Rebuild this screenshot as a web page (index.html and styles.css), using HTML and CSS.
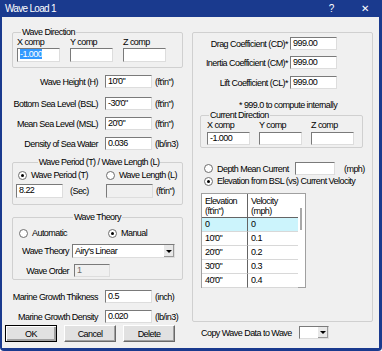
FILE: index.html
```html
<!DOCTYPE html>
<html lang="en">

<head>
  <meta charset="UTF-8" />
  <title>Wave Load 1</title>
  <link rel="stylesheet" href="styles.css">
</head>

<body>
  <div class="window">
    <div class="titlebar">
      <span class="title">Wave Load 1</span>
      <span class="help">?</span>
      <span class="close">&#x2715;</span>
    </div>

    <div class="client">
      <!-- left column -->
      <div class="col col-left">
        <fieldset class="group dir">
          <legend>Wave Direction</legend>
          <div class="comp-grid">
            <span>X comp</span><span>Y comp</span><span>Z comp</span>
            <div class="field"><span class="sel">-1.000</span></div>
            <div class="field"></div>
            <div class="field"></div>
          </div>
        </fieldset>

        <div class="row r-wh"><span class="lbl">Wave Height (H)</span><div class="field w47">10'0"</div><span class="unit">(ft'in")</span></div>
        <div class="row r-bsl"><span class="lbl">Bottom Sea Level (BSL)</span><div class="field w47">-30'0"</div><span class="unit">(ft'in")</span></div>
        <div class="row r-msl"><span class="lbl">Mean Sea Level (MSL)</span><div class="field w47">20'0"</div><span class="unit">(ft'in")</span></div>
        <div class="row r-den"><span class="lbl">Density of Sea Water</span><div class="field w47">0.036</div><span class="unit">(lb/in3)</span></div>

        <fieldset class="group period">
          <legend class="center">Wave Period (T) / Wave Length (L)</legend>
          <div class="opt-row">
            <div class="opt-cell"><span class="radio on"></span><span>Wave Period (T)</span></div>
            <div class="opt"><span class="radio"></span><span>Wave Length (L)</span></div>
          </div>
          <div class="in-row">
            <div class="in-cell"><div class="field w47">8.22</div><span class="unit sec">(Sec)</span></div>
            <div class="field w47 off"></div><span class="unit">(ft'in")</span>
          </div>
        </fieldset>

        <fieldset class="group theory">
          <legend class="center">Wave Theory</legend>
          <div class="opt-row th-opts">
            <div class="opt-cell th-cell"><span class="radio"></span><span>Automatic</span></div>
            <div class="opt"><span class="radio on"></span><span>Manual</span></div>
          </div>
          <div class="th-row th-sel">
            <span class="th-lbl">Wave Theory</span>
            <div class="combo w103"><span class="combo-val">Airy's Linear</span><span class="combo-btn"></span></div>
          </div>
          <div class="th-row th-order">
            <span class="th-lbl">Wave Order</span>
            <div class="field off order">1</div>
          </div>
        </fieldset>

        <div class="row r-mgt"><span class="lbl">Marine Growth Thikness</span><div class="field w47">0.5</div><span class="unit">(inch)</span></div>
        <div class="row r-mgd"><span class="lbl">Marine Growth Density</span><div class="field w47">0.020</div><span class="unit">(lb/in3)</span></div>

        <div class="buttons">
          <button class="btn default">OK</button>
          <button class="btn">Cancel</button>
          <button class="btn">Delete</button>
        </div>
      </div>

      <!-- right column -->
      <div class="col col-right">
        <fieldset class="group coeffs">
          <div class="crow c-drag"><span class="clbl">Drag Coefficient (CD)*</span><div class="field w47">999.00</div></div>
          <div class="crow c-inertia"><span class="clbl">Inertia Coefficient (CM)*</span><div class="field w47">999.00</div></div>
          <div class="crow c-lift"><span class="clbl">Lift Coefficient (CL)*</span><div class="field w47">999.00</div></div>
          <div class="note">* 999.0 to compute internally</div>

          <fieldset class="group current">
            <legend>Current Direction</legend>
            <div class="comp-grid">
              <span>X comp</span><span>Y comp</span><span>Z comp</span>
              <div class="field">-1.000</div>
              <div class="field"></div>
              <div class="field"></div>
            </div>
          </fieldset>

          <div class="crow depth"><span class="radio"></span><span class="depth-lbl">Depth Mean Current</span><div class="field w40"></div><span class="unit mph">(mph)</span></div>
          <div class="crow elev"><span class="radio on"></span><span class="depth-lbl">Elevation from BSL (vs) Current Velocity</span></div>

          <div class="grid">
            <div class="grid-cols">
              <div class="gcell head">Elevation<br>(ft'in")</div>
              <div class="gcell head">Velocity<br>(mph)</div>
              <div class="gcell cur">0</div><div class="gcell cur">0</div>
              <div class="gcell">10'0"</div><div class="gcell">0.1</div>
              <div class="gcell">20'0"</div><div class="gcell">0.2</div>
              <div class="gcell">30'0"</div><div class="gcell">0.3</div>
              <div class="gcell">40'0"</div><div class="gcell">0.4</div>
            </div>
            <div class="grid-scroll"><span class="thumb"></span></div>
          </div>
        </fieldset>

        <div class="copy-row">
          <span class="copy-lbl">Copy Wave Data to Wave</span>
          <div class="combo w30"><span class="combo-val"></span><span class="combo-btn"></span></div>
        </div>
      </div>
    </div>
  </div>
</body>

</html>
```

FILE: styles.css
```css
:root {
  --frame: #1a3a8e;
  --face: #f0f0f0;
  --group-line: #d0d0d0;
  --text: #000000;
}

* {
  box-sizing: border-box;
}

body {
  margin: 0;
  font-family: "Liberation Sans", Arial, sans-serif;
  font-size: 9px;
  letter-spacing: -0.55px;
  line-height: 10px;
  color: var(--text);
}

.window {
  width: 382px;
  height: 351px;
  background: var(--frame);
  padding: 0 3px 3px 2px;
  display: flex;
  flex-direction: column;
  border-radius: 0 0 4px 4px;
}

.titlebar {
  height: 17px;
  display: flex;
  align-items: center;
  color: #ffffff;
  font-size: 10px;
  letter-spacing: -0.7px;
}

.title {
  margin-left: 3px;
  flex: 1;
}

.help {
  font-size: 10px;
  margin-right: 27px;
}

.close {
  font-size: 10px;
  margin-right: 11px;
}

.client {
  flex: 1;
  background: var(--face);
  display: flex;
  padding-left: 10px;
  gap: 9px;
}

.col {
  display: flex;
  flex-direction: column;
}

.col-left {
  width: 171px;
}

.col-right {
  width: 181px;
}

/* group boxes */
.group {
  margin: 0;
  padding: 0;
  border: 1px solid var(--group-line);
  border-radius: 2px;
}

.group legend {
  padding: 0 1px;
  line-height: 10px;
  margin-left: 4px;
}

.group legend.center {
  margin-left: auto;
  margin-right: auto;
}

.dir {
  margin-top: 10px;
  padding: 0 0 5px 4px;
}

.comp-grid {
  display: grid;
  grid-template-columns: repeat(3, 43px);
  column-gap: 10px;
  row-gap: 1px;
}

.comp-grid .field {
  height: 14px;
}

/* text boxes */
.field {
  height: 13px;
  background: #ffffff;
  border: 1px solid;
  border-color: #7a7a7a #dddddd #dddddd #7a7a7a;
  padding-left: 2px;
  line-height: 11px;
  white-space: nowrap;
  overflow: hidden;
}

.field.off {
  background: var(--face);
}

.sel {
  background: #3399ff;
  color: #ffffff;
}

.w47 {
  width: 47px;
}

.w40 {
  width: 40px;
}

.row {
  display: flex;
  align-items: center;
  height: 13px;
}

.row .lbl {
  width: 86px;
  text-align: right;
  margin-right: 7px;
  white-space: nowrap;
}

.unit {
  margin-left: 3px;
  white-space: nowrap;
}

.r-wh {
  margin-top: 7px;
}

.r-bsl {
  margin-top: 9px;
}

.r-msl,
.r-den {
  margin-top: 7px;
}

/* radio buttons */
.radio {
  width: 9px;
  height: 9px;
  border-radius: 50%;
  border: 1px solid #6d6d6d;
  background: #ffffff;
  margin-right: 4px;
  display: inline-flex;
  align-items: center;
  justify-content: center;
  flex-shrink: 0;
}

.radio.on::after {
  content: "";
  width: 3px;
  height: 3px;
  border-radius: 50%;
  background: #000000;
}

.period {
  margin-top: 7px;
  padding: 3px 0 6px 3px;
}

.opt-row {
  display: flex;
  align-items: center;
  height: 10px;
}

.opt-cell,
.opt {
  display: flex;
  align-items: center;
  white-space: nowrap;
}

.opt-cell {
  width: 90px;
  padding-left: 2px;
}

.in-row {
  display: flex;
  align-items: center;
  margin-top: 4px;
}

.in-row .field {
  height: 14px;
}

.in-cell {
  display: flex;
  align-items: center;
  width: 90px;
}

.unit.sec {
  margin-left: 7px;
}

.theory {
  margin-top: 7px;
  padding: 6px 0 2px 0;
}

.th-opts {
  padding-left: 3px;
}

.th-cell {
  width: 92px;
  padding-left: 3px;
}

.th-row {
  display: flex;
  align-items: center;
}

.th-sel {
  margin-top: 6px;
}

.th-order {
  margin-top: 6px;
}

.th-lbl {
  width: 56px;
  text-align: right;
  margin-right: 3px;
  white-space: nowrap;
}

.order {
  width: 36px;
  margin-left: 2px;
  color: #6d6d6d;
}

/* combo boxes */
.combo {
  height: 14px;
  background: #ffffff;
  border: 1px solid;
  border-color: #7a7a7a #dddddd #dddddd #7a7a7a;
  display: flex;
}

.w103 {
  width: 103px;
}

.w30 {
  width: 30px;
  height: 13px;
}

.combo-val {
  flex: 1;
  padding-left: 2px;
  line-height: 12px;
}

.combo-btn {
  width: 11px;
  background: #e8e8e8;
  border-left: 1px solid #ffffff;
  box-shadow: inset -1px -1px #9a9a9a;
  display: flex;
  align-items: center;
  justify-content: center;
}

.combo-btn::after {
  content: "";
  border-left: 3px solid transparent;
  border-right: 3px solid transparent;
  border-top: 3px solid #000000;
}

.r-mgt {
  margin-top: 10px;
}

.r-mgd {
  margin-top: 7px;
}

/* push buttons */
.buttons {
  display: flex;
  gap: 7px;
  margin: 2px 0 0 -7px;
}

.btn {
  width: 52px;
  height: 17px;
  padding: 0;
  font: inherit;
  letter-spacing: inherit;
  background: #e1e1e1;
  border: 1px solid;
  border-color: #ffffff #696969 #696969 #ffffff;
  box-shadow: inset -1px -1px #a0a0a0;
}

.btn.default {
  border-color: #000000;
  box-shadow: inset 1px 1px #ffffff, inset -2px -2px #a0a0a0;
}

/* right column */
.coeffs {
  margin-top: 15px;
  padding: 4px 0 33px 0;
}

.crow {
  display: flex;
  align-items: center;
}

.clbl {
  width: 95px;
  text-align: right;
  margin-right: 2px;
  white-space: nowrap;
}

.c-inertia {
  margin-top: 6px;
}

.c-lift {
  margin-top: 7px;
}

.note {
  margin-top: 11px;
  padding-left: 46px;
}

.current {
  margin: 0 9px 0 7px;
  padding: 0 0 2px 6px;
}

.current legend {
  margin-left: 2px;
}

.current .comp-grid {
  column-gap: 9px;
  row-gap: 2px;
}

.current .comp-grid .field {
  height: 13px;
}

.depth {
  margin-top: 14px;
  padding-left: 11px;
}

.depth-lbl {
  width: 78px;
  white-space: nowrap;
}

.unit.mph {
  margin-left: 9px;
}

.elev {
  margin-top: 1px;
  padding-left: 11px;
}

/* velocity table */
.grid {
  margin: 7px 0 0 8px;
  width: 105px;
  height: 95px;
  border: 1px solid #a0a0a0;
  background: #ffffff;
  display: flex;
}

.grid-cols {
  display: grid;
  grid-template-columns: 46px 50px;
  grid-template-rows: 24px repeat(5, 14px);
  align-content: start;
}

.gcell {
  padding: 1px 0 0 3px;
  border-bottom: 1px solid #d8d8d8;
  line-height: 10px;
}

.gcell:nth-child(odd) {
  border-right: 1px solid #646464;
}

.gcell.head {
  padding-top: 2px;
  border-bottom-color: #646464;
}

.gcell.cur {
  background: #ccf4fc;
}

.grid-scroll {
  flex: 1;
  padding: 14px 0 0 2px;
}

.thumb {
  display: block;
  width: 2px;
  height: 22px;
  background: #a8a8a8;
}

.copy-row {
  display: flex;
  align-items: center;
  margin-top: 4px;
  padding-left: 9px;
}

.copy-lbl {
  width: 98px;
  white-space: nowrap;
}
```
